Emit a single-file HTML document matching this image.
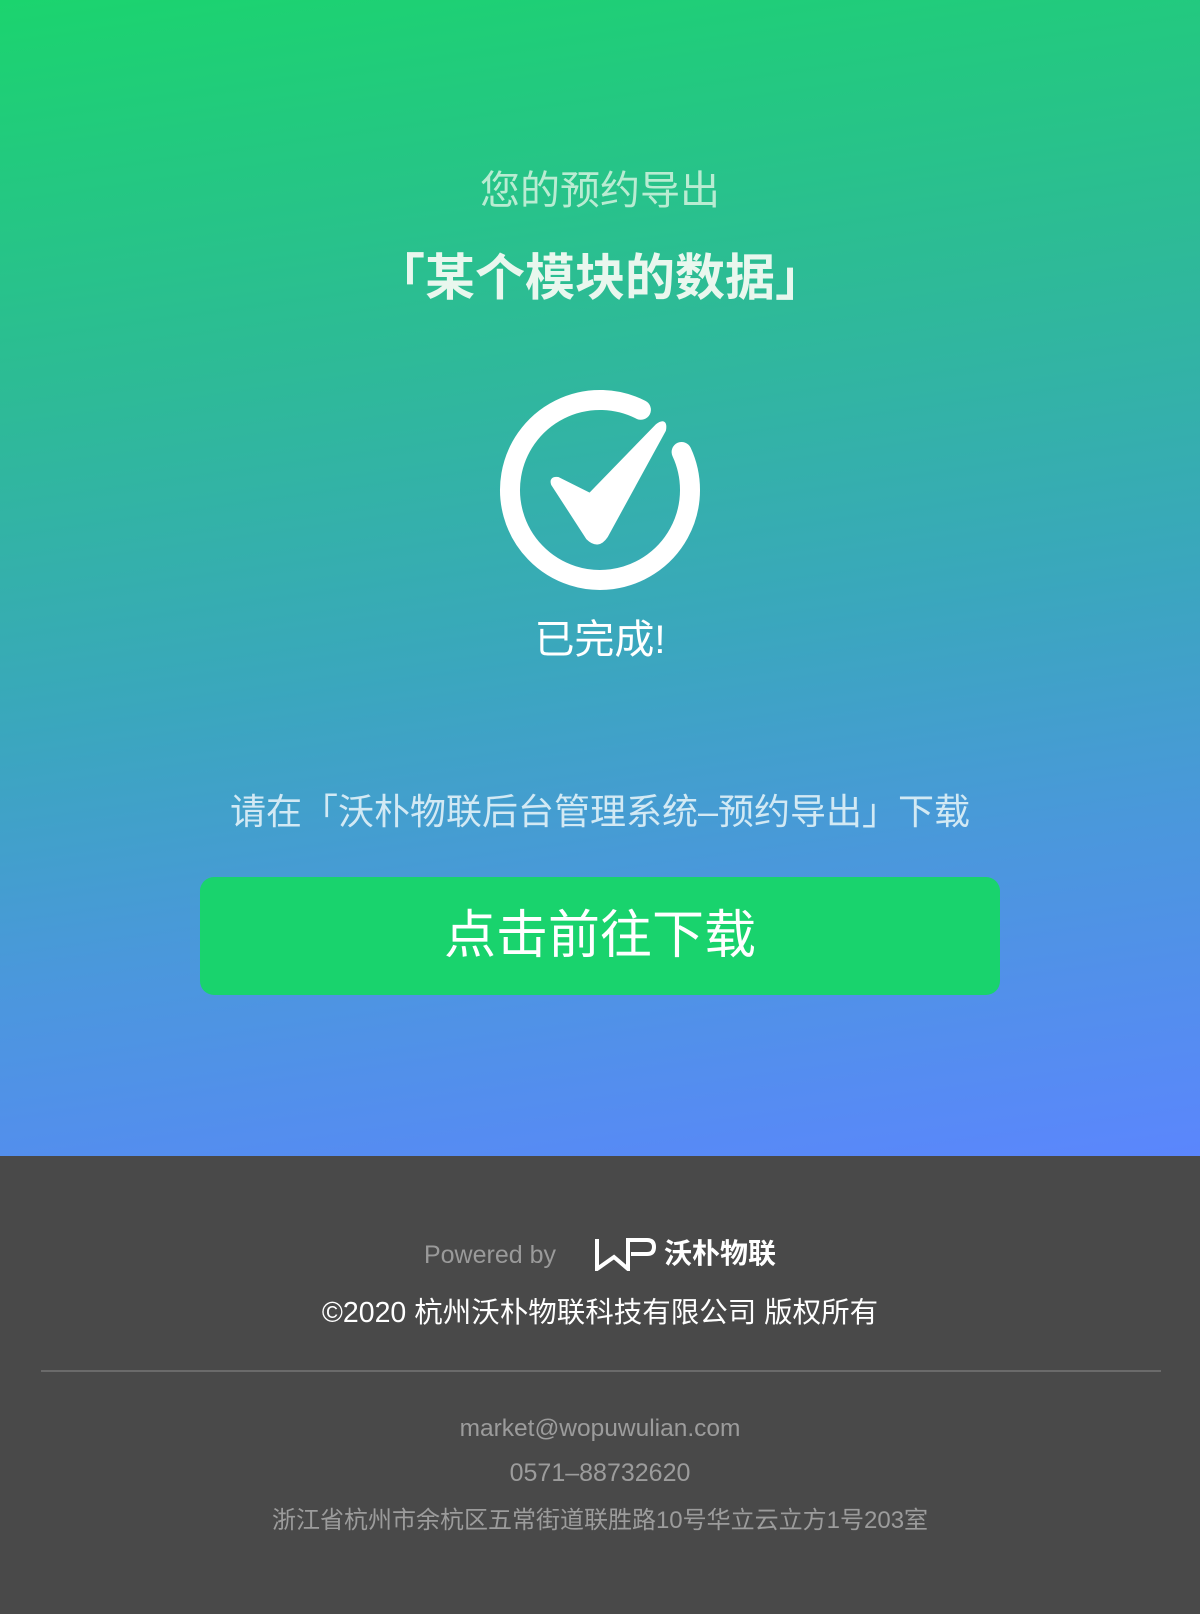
<!DOCTYPE html>
<html><head><meta charset="utf-8"><style>
*{margin:0;padding:0;box-sizing:border-box}
body{width:1200px;height:1614px;overflow:hidden;font-family:"Liberation Sans","Noto Sans CJK SC",sans-serif}
.top{position:relative;height:1156px;background:linear-gradient(172deg,#1bd46e 0%,#2dbb96 30%,#3aa7bd 55%,#4b97dd 75%,#5b86fd 100%);overflow:hidden}
.t{position:absolute;left:0;width:1200px;text-align:center;white-space:nowrap}
.foot{position:relative;height:458px;background:#494949}
</style></head><body>
<div class="top">
<div class="t" style="top:158px;font-size:40px;color:#b9ecd2">您的预约导出</div>
<div class="t" style="top:238px;font-size:50px;font-weight:bold;color:#e9f7ee">「某个模块的数据」</div>
<svg style="position:absolute;left:0;top:0" width="1200" height="700">
<path d="M681.6 452 A90 90 0 1 1 640.9 409.8" fill="none" stroke="#fff" stroke-width="20" stroke-linecap="round"/>
<path d="M553 484 Q551 478 558 479 L590 495 L657 426 Q666 419 664 430 L606 536 Q598 548 588 538 Z" fill="#fff" stroke="#fff" stroke-width="4" stroke-linejoin="round"/>
</svg>
<div class="t" style="top:607px;font-size:40px;color:#fff">已完成!</div>
<div class="t" style="top:783px;font-size:36px;color:#d2e9f4">请在「沃朴物联后台管理系统–预约导出」下载</div>
<div style="position:absolute;left:200px;top:877px;width:800px;height:118px;background:#19d36d;border-radius:14px;color:#fff;font-size:52px;text-align:center;line-height:118px">点击前往下载</div>
</div>
<div class="foot">
<div class="t" style="top:76px;font-size:25px;color:#9a9a9a"><span style="margin-right:38px">Powered by</span><svg width="62" height="34" viewBox="0 0 62 34" style="vertical-align:-8px"><path d="M3 2 V32 L20 20 L34 32 V3 H53 Q60 3 60 10 Q60 17 53 17 H37" fill="none" stroke="#fff" stroke-width="4"/></svg><span style="color:#fff;font-weight:bold;font-size:28px;margin-left:8px">沃朴物联</span></div>
<div class="t" style="top:134px;font-size:28.5px;color:#fff">©2020 杭州沃朴物联科技有限公司 版权所有</div>
<div style="position:absolute;left:41px;top:214px;width:1120px;height:2px;background:#6a6a6a"></div>
<div class="t" style="top:259px;font-size:24.5px;color:#9c9c9c">market@wopuwulian.com</div>
<div class="t" style="top:303px;font-size:25px;color:#9c9c9c">0571–88732620</div>
<div class="t" style="top:344px;font-size:24px;color:#9c9c9c">浙江省杭州市余杭区五常街道联胜路10号华立云立方1号203室</div>
</div>
</body></html>
